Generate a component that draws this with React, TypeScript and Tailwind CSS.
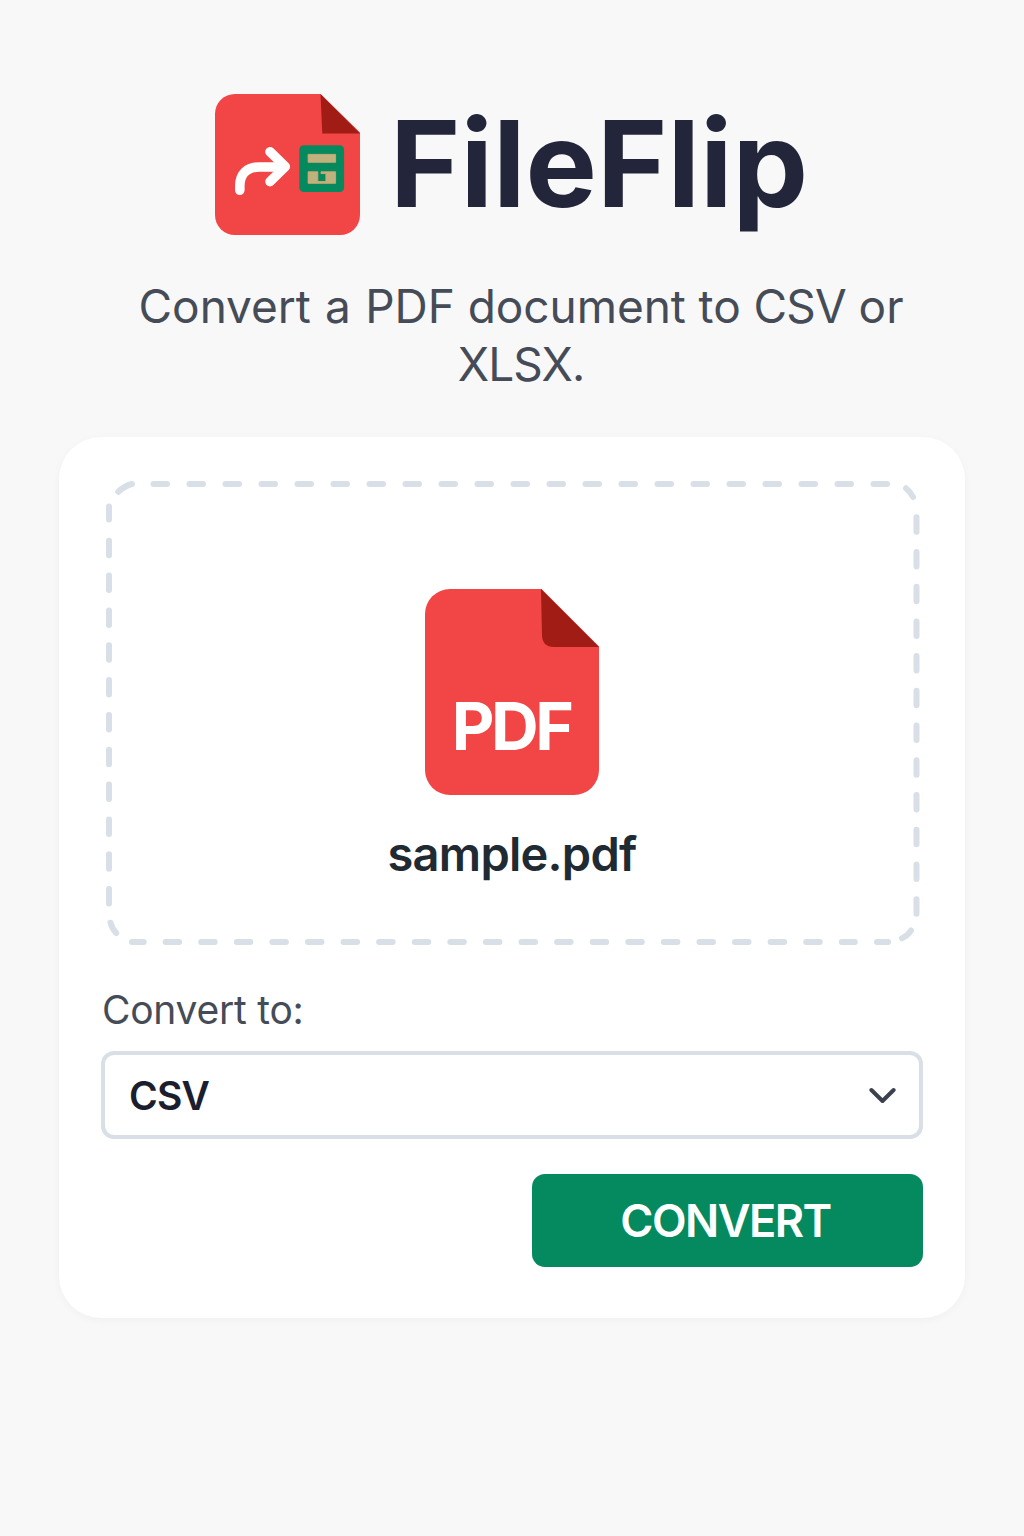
function LogoIcon() {
  return (
    <svg className="h-[141px] w-[145px] shrink-0" viewBox="215 94 145 141" fill="none" aria-hidden="true">
      <path d="M235 94H320.5L360 132.5V215A20 20 0 0 1 340 235H235A20 20 0 0 1 215 215V114A20 20 0 0 1 235 94Z" fill="#f14546" />
      <path d="M320.5 94L360 133.5H322.3Z" fill="#a01c14" />
      <g stroke="#fff" strokeWidth="9.6" strokeLinecap="round" strokeLinejoin="round">
        <path d="M239.8 190.3V186C239.8 174 247 167 259.5 167H283" />
        <path d="M270 151.8L285.3 166.6L270 181.6" />
      </g>
      <rect x="299.3" y="145.3" width="44.8" height="46.7" rx="4.5" fill="#048a5e" />
      <g fill="#c0b27f" stroke="#d6a66c" strokeWidth="0.9">
        <path d="M308.1 154.4H335.6V162.3H308.1Z" />
        <path d="M308.1 171.8H317.8V181.6H325.9V173.6H321V171.8H335.6V183.3H308.1Z" />
      </g>
    </svg>
  );
}

function PdfIcon() {
  return (
    <svg className="h-[206px] w-[174px] shrink-0" viewBox="0 0 174 206" aria-hidden="true">
      <path d="M25 0H116.5L174 57.5V181A25 25 0 0 1 149 206H25A25 25 0 0 1 0 181V25A25 25 0 0 1 25 0Z" fill="#f14546" />
      <path d="M116 0L174 58H129Q117.3 58 117 46Z" fill="#a01c14" />
      <text x="26.8" y="161" fill="#fff" fontFamily="Inter, sans-serif" fontWeight="700" fontSize="66" letterSpacing="-3.5">
        PDF
      </text>
    </svg>
  );
}

function DashedFrame() {
  return (
    <svg
      className="pointer-events-none absolute inset-0 size-full"
      viewBox="101 478 822 470"
      fill="none"
      stroke="#d8dfe7"
      strokeWidth="6"
      strokeLinecap="round"
      aria-hidden="true"
    >
      <path d="M153.5 484H887.3" strokeDasharray="13.5 22.5" />
      <path d="M132 942H143.7" />
      <path d="M165.6 942H854.8" strokeDasharray="13.5 22.09" />
      <path d="M877 942H888" />
      <path d="M109 506.5V519.5" />
      <path d="M109 540.7V905" strokeDasharray="14.5 20.34" />
      <path d="M916.5 517.2V914" strokeDasharray="14.5 20.23" />
      <path d="M118.3 491.7Q124.5 486 132 484" />
      <path d="M906 488.3Q910.5 492 913 497" />
      <path d="M110.5 922.7Q112 928.5 116.2 933" />
      <path d="M902 938.3Q907.5 936 911 930.5" />
    </svg>
  );
}

export default function App() {
  return (
    <main className="flex min-h-[1536px] w-[1024px] flex-col bg-[#f8f8f8] pt-[94px] font-['Inter',sans-serif]">
      <header className="flex flex-col">
        <div className="flex items-center gap-[30px] pl-[215px]">
          <LogoIcon />
          <h1 className="-mt-0.5 text-[120px] leading-none font-bold text-[#23263b]">FileFlip</h1>
        </div>
        <p className="mt-[42px] ml-[121px] w-[800px] text-center text-[46px] leading-[58px] tracking-[-0.06px] text-[#454c57]">
          <span className="[word-spacing:1.5px]">Convert a PDF</span> document to <span className="tracking-[-0.9px]">CSV</span> or
          <br />
          <span className="tracking-[-0.9px]">XLSX.</span>
        </p>
      </header>

      <section className="mt-11 ml-[59px] flex w-[906px] flex-col rounded-[42px] bg-white px-[42px] pt-[41px] pb-[51px] shadow-[0_2px_10px_rgba(0,0,0,0.035)]">
        <div className="relative flex h-[470px] flex-col items-center pt-[111px]">
          <DashedFrame />
          <PdfIcon />
          <span className="mt-[35px] text-[47px] leading-none font-semibold tracking-[-0.75px] text-[#1f2a33]">sample.pdf</span>
        </div>

        <label className="mt-[42px] pl-px text-[39px] leading-none tracking-[-0.25px] text-[#454c57]">Convert to:</label>
        <button
          type="button"
          className="mt-[22px] flex h-[88px] items-center justify-between rounded-[13px] border-4 border-[#d8dfe7] pr-[23px] pl-6"
        >
          <span className="text-[39px] leading-none font-semibold tracking-[-0.8px] text-[#1b1e2e]">CSV</span>
          <svg className="mt-px h-[17px] w-[27px]" viewBox="0 0 27 17" fill="none" stroke="#3b424e" strokeWidth="4" strokeLinecap="round" strokeLinejoin="round" aria-hidden="true">
            <path d="M2.4 3L13.5 14L24.6 3" />
          </svg>
        </button>

        <button
          type="button"
          className="mt-[35px] flex h-[93px] w-[391px] items-center justify-center self-end rounded-[13px] bg-[#048a5e] pr-1 text-[45px] leading-none font-semibold tracking-[-1.5px] text-white"
        >
          CONVERT
        </button>
      </section>
    </main>
  );
}
